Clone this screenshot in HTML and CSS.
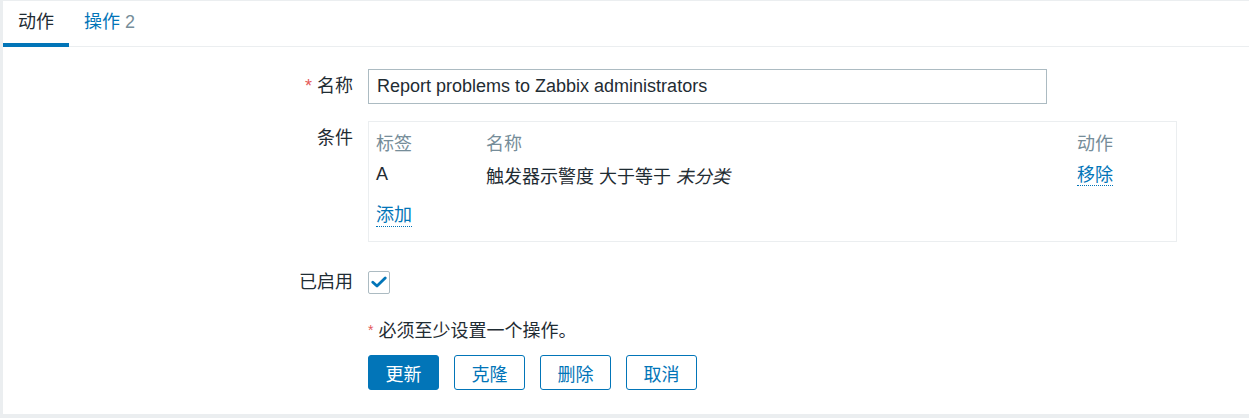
FILE: index.html
```html
<!DOCTYPE html>
<html lang="zh">
<head>
<meta charset="utf-8">
<title>动作</title>
<link rel="stylesheet" href="styles.css">
</head>
<body>
<div class="panel">
  <nav class="tabs">
    <a class="tab active">动作</a>
    <a class="tab">操作 <span class="count">2</span></a>
  </nav>
  <form class="form">
    <div class="row row-name">
      <label class="label"><span class="req">*</span> 名称</label>
      <div class="field"><input class="text-input" type="text" value="Report problems to Zabbix administrators"></div>
    </div>
    <div class="row row-cond">
      <label class="label">条件</label>
      <div class="field">
        <div class="cond-box">
          <div class="cond-row head">
            <span class="c1">标签</span><span class="c2">名称</span><span class="c3">动作</span>
          </div>
          <div class="cond-row">
            <span class="c1">A</span><span class="c2">触发器示警度 大于等于 <em>未分类</em></span><span class="c3"><a class="link">移除</a></span>
          </div>
          <div class="add-row"><a class="link">添加</a></div>
        </div>
      </div>
    </div>
    <div class="row row-enabled">
      <label class="label">已启用</label>
      <div class="field">
        <span class="checkbox">
          <svg width="16" height="12" viewBox="0 0 16 12"><path d="M1.8 6.2 L6 10 L14.2 2" fill="none" stroke="#0275b8" stroke-width="2.8" stroke-linecap="round" stroke-linejoin="round"/></svg>
        </span>
      </div>
    </div>
    <div class="row row-note">
      <div class="label"></div>
      <div class="field"><span class="req small">*</span> 必须至少设置一个操作。</div>
    </div>
    <div class="row row-buttons">
      <div class="label"></div>
      <div class="field buttons">
        <button type="button" class="btn primary">更新</button>
        <button type="button" class="btn">克隆</button>
        <button type="button" class="btn">删除</button>
        <button type="button" class="btn">取消</button>
      </div>
    </div>
  </form>
</div>
</body>
</html>
```
FILE: styles.css
```css
* { box-sizing: border-box; }
html, body { margin: 0; padding: 0; }
body {
  background: #ebeef0;
  font-family: "Liberation Sans", "Noto Sans CJK SC", sans-serif;
  font-size: 18px;
  color: #1f2c33;
  width: 1249px;
  height: 418px;
  overflow: hidden;
}
.panel {
  margin: 1px 0 0 3px;
  height: 413px;
  background: #fff;
}
.tabs {
  display: flex;
  height: 46px;
  border-bottom: 1px solid #ebeef0;
}
.tab {
  display: block;
  height: 46px;
  line-height: 42px;
  padding: 0 15px;
  color: #0275b8;
  border-bottom: 4px solid transparent;
  cursor: pointer;
}
.tab.active {
  color: #1f2c33;
  border-bottom-color: #0275b8;
}
.tab .count { color: #768d99; }

.form {
  display: flex;
  flex-direction: column;
  padding-top: 22px;
}
.row {
  display: flex;
  gap: 15px;
}
.label {
  width: 350px;
  flex: none;
  text-align: right;
  line-height: 35px;
  height: 35px;
}
.req { color: #e45959; }
.req.small { font-size: 14px; vertical-align: 2px; }
.field { flex: none; }

.row-name { margin-bottom: 17px; }
.text-input {
  width: 679px;
  height: 35px;
  border: 1px solid #acbbc2;
  border-radius: 0;
  padding: 0 8px;
  font: inherit;
  color: #1f2c33;
  outline: none;
}

.row-cond { margin-bottom: 28px; }
.cond-box {
  width: 809px;
  height: 121px;
  border: 1px solid #ebeef0;
  padding: 3px 8px 0 7px;
}
.cond-row {
  display: flex;
  height: 33px;
  align-items: center;
}
.cond-row.head { color: #768d99; }
.c1 { width: 110px; flex: none; }
.c2 { width: 591px; flex: none; }
.c3 { flex: 1; }
.cond-row em { font-style: italic; }
.add-row {
  padding-top: 8px;
  height: 40px;
  display: flex;
  align-items: center;
}
.link {
  color: #0275b8;
  border-bottom: 1px dotted #0275b8;
  line-height: 22px;
  cursor: pointer;
}

.row-enabled {
  align-items: center;
  height: 24px;
  margin-bottom: 19px;
}
.row-enabled .label { line-height: 24px; height: 24px; }
.checkbox {
  display: flex;
  width: 22px;
  height: 23px;
  border: 1px solid #acbbc2;
  border-radius: 2px;
  align-items: center;
  justify-content: center;
}

.row-note { margin-bottom: 6px; }
.row-note .field { line-height: 35px; }

.buttons {
  display: flex;
  gap: 15px;
}
.btn {
  width: 71px;
  height: 35px;
  border: 1px solid #0275b8;
  border-radius: 3px;
  background: #fff;
  color: #0275b8;
  font: inherit;
  padding: 0;
  cursor: pointer;
}
.btn.primary {
  background: #0275b8;
  color: #fff;
}
```
